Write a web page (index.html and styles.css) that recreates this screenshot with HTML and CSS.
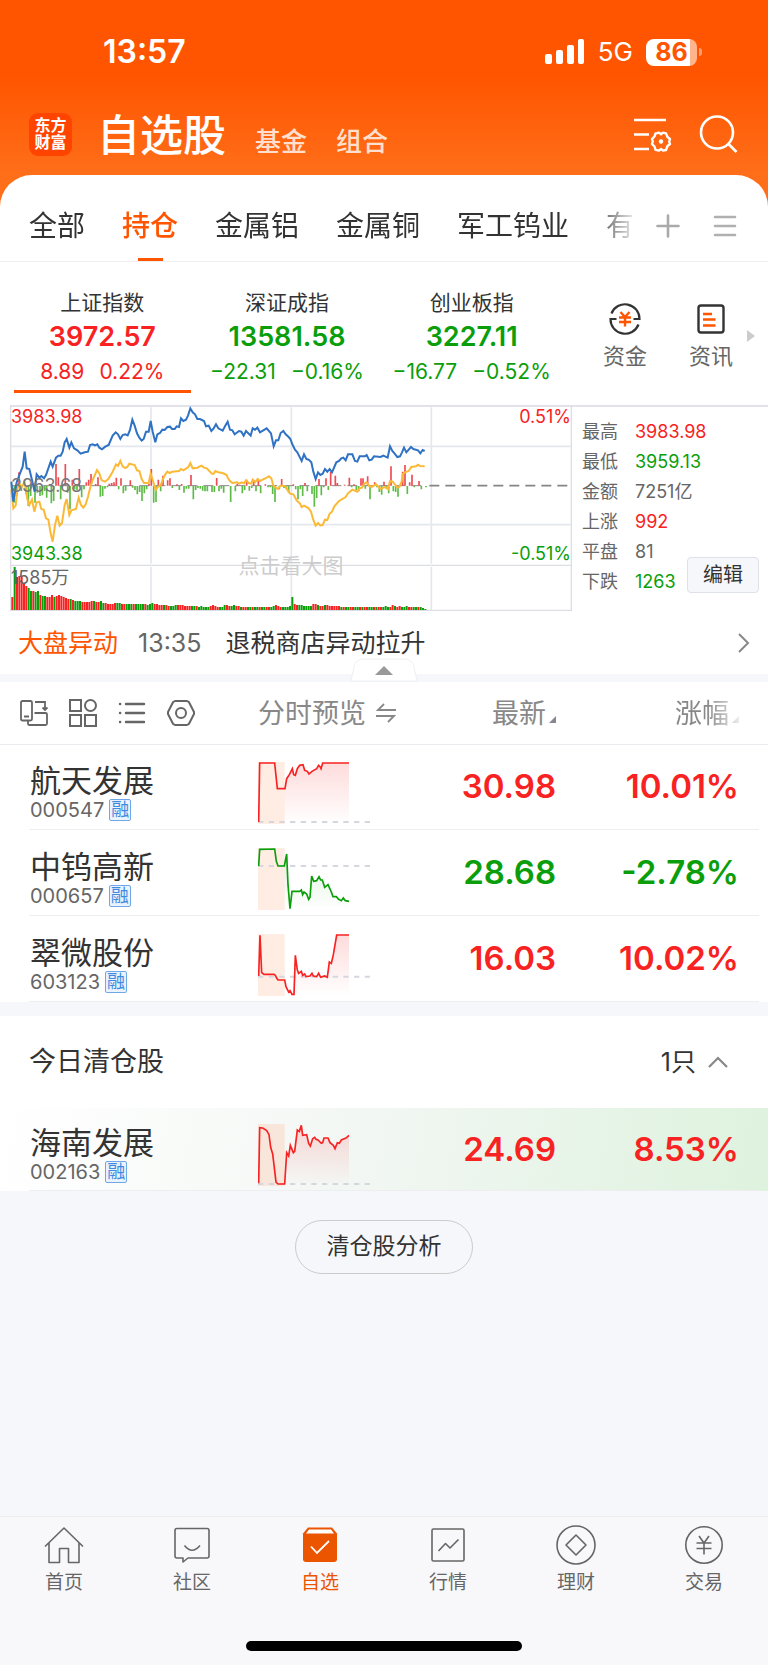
FILE: index.html
```html
<!DOCTYPE html>
<html lang="zh-CN">
<head>
    <meta charset="UTF-8">
    <meta name="viewport" content="width=device-width, initial-scale=1.0">
    <title>自选股</title>
    <link rel="stylesheet" href="styles.css">
</head>
<body>
    <header class="header">
        <div class="status">
            <span class="status-time">13:57</span>
            <div class="status-right">
                <svg width="40" height="26" viewBox="0 0 40 26" fill="#fff">
                    <rect x="0" y="15" width="7" height="10" rx="2"/>
                    <rect x="11" y="11" width="7" height="14" rx="2"/>
                    <rect x="22" y="6" width="7" height="19" rx="2"/>
                    <rect x="33" y="0" width="6" height="25" rx="2"/>
                </svg>
                <span class="status-net">5G</span>
                <div class="battery"><span class="battery-body">86</span><span class="battery-tip"></span></div>
            </div>
        </div>
        <div class="brand">
            <div class="logo"><span>东方</span><span>财富</span></div>
            <nav class="brand-nav">
                <a class="brand-title" href="#">自选股</a>
                <a href="#">基金</a>
                <a href="#">组合</a>
            </nav>
            <button type="button" class="icon-btn" aria-label="设置">
                <svg width="40" height="38" viewBox="0 0 40 38" fill="none" stroke="#fff" stroke-width="2.6">
                    <path d="M1 4H33M1 18.500H16M1 33H16"/>
                    <path d="M24 17.200L26 16.600L28 18.200L30 16.600L33 17.400L34.500 21L37 23L36.200 25.500L37 28L34.500 30L33 34L30 34.600L28 33L26 34.600L22.500 33.800L21.500 30.500L19 28L19.800 25.500L19 23L21.500 20.500L22.500 17.400Z" stroke-width="2.4" stroke-linejoin="round"/>
                    <circle cx="28" cy="25.500" r="2.200" fill="#fff" stroke="none"/>
                </svg>
            </button>
            <button type="button" class="icon-btn" aria-label="搜索">
                <svg width="40" height="40" viewBox="0 0 40 40" fill="none" stroke="#fff" stroke-width="2.6">
                    <circle cx="19" cy="17.500" r="16"/>
                    <path d="M30 28.500L38.500 37"/>
                </svg>
            </button>
        </div>
    </header>

    <main class="main">
        <div class="tabs">
            <nav class="tabs-list">
                <a href="#">全部</a>
                <a href="#" class="active">持仓</a>
                <a href="#">金属铝</a>
                <a href="#">金属铜</a>
                <a href="#">军工钨业</a>
                <a href="#">有</a>
            </nav>
            <button type="button" class="icon-btn" aria-label="添加">
                <svg width="24" height="24" viewBox="0 0 24 24" stroke="#aaa" stroke-width="2.6" stroke-linecap="round"><path d="M1.500 12H22.500M12 1.500V22.500"/></svg>
            </button>
            <button type="button" class="icon-btn" aria-label="菜单">
                <svg width="24" height="24" viewBox="0 0 24 24" stroke="#b0b0b0" stroke-width="2.6" stroke-linecap="round"><path d="M2 3H22M2 12H22M2 21H22"/></svg>
            </button>
        </div>

        <section class="indices">
            <a href="#" class="index up active">
                <span class="index-name">上证指数</span>
                <strong>3972.57</strong>
                <span class="index-diff"><span>8.89</span><span>0.22%</span></span>
            </a>
            <a href="#" class="index down">
                <span class="index-name">深证成指</span>
                <strong>13581.58</strong>
                <span class="index-diff"><span>−22.31</span><span>−0.16%</span></span>
            </a>
            <a href="#" class="index down">
                <span class="index-name">创业板指</span>
                <strong>3227.11</strong>
                <span class="index-diff"><span>−16.77</span><span>−0.52%</span></span>
            </a>
            <div class="tools">
                <a href="#">
                    <svg width="34" height="34" viewBox="0 0 34 34" fill="none" stroke="#333" stroke-width="2.2">
                        <path d="M3.500 11.500A14.500 14.500 0 0 1 31.500 17H25.500"/>
                        <path d="M30.500 22.500A14.500 14.500 0 0 1 2.500 17H8.500"/>
                        <path d="M12.500 10L17 15L21.500 10M11 15.500H23M11 20H23M17 15V24.500" stroke="#ff5500" stroke-width="2.4"/>
                    </svg>
                    <span>资金</span>
                </a>
                <a href="#">
                    <svg width="34" height="34" viewBox="0 0 34 34" fill="none" stroke="#333" stroke-width="2.400">
                        <rect x="4.500" y="3.500" width="25" height="27" rx="2.500"/>
                        <path d="M9 12H18M9 17.500H21.500M9 23.500H21.500" stroke="#ff5500" stroke-width="2.400"/>
                    </svg>
                    <span>资讯</span>
                </a>
                <svg class="tools-more" width="8" height="12" viewBox="0 0 8 12" fill="#ccc"><path d="M0 0L8 6L0 12Z"/></svg>
            </div>
        </section>

        <section class="market">
            <div class="chart">
                <svg class="chart-svg" viewBox="30 30 1686 618" fill="none">
                    <g stroke="#e4e7ee" stroke-width="5">
                        <path d="M30 154H1715M30 389H1715M453 37V506M453 516V645M874 37V506M874 516V645M1294 37V506M1294 516V645"/>
                    </g>
                    <path d="M32 30V646H1714V30M32 511H1714" stroke="#dcdee4" stroke-width="4"/>
                    <path d="M34 272H1280" stroke="#888" stroke-width="3" stroke-dasharray="30 18"/>
                    <path d="M1288 272H1704" stroke="#858585" stroke-width="5" stroke-dasharray="30 18"/>
                    <g id="flow" stroke-width="5"></g>
                    <g id="volume" stroke-width="6"></g>
                    <polyline stroke="#fbb935" stroke-width="6" points="34,285 40,340 47,332 52,280 60,268 66,275 74,262 82,312 88,330 96,314 103,350 110,322 118,320 124,342 131,344 138,370 145,374 152,415 158,440 165,390 172,362 179,392 186,384 194,330 200,312 208,360 214,346 228,342 236,308 243,330 250,338 257,328 264,305 270,280 278,255 291,225 298,235 305,256 315,260 325,252 338,230 348,208 354,213 361,198 368,214 376,219 382,216 388,206 404,210 411,226 418,228 425,252 432,264 446,264 452,236 459,258 467,285 474,275 482,272 489,252 496,238 502,230 509,234 517,230 537,228 543,222 550,226 565,216 571,204 578,220 592,218 604,212 612,218 620,220 636,236 641,236 646,228 655,232 668,234 680,240 684,250 690,258 697,264 711,262 718,266 725,262 732,265 738,256 746,264 754,266 758,254 765,262 773,252 780,258 800,248 807,244 814,250 820,272 827,278 834,282 841,272 848,272 856,274 862,284 870,296 880,298 890,316 900,326 905,336 912,332 926,340 933,350 940,375 947,392 954,384 961,391 968,390 975,374 982,375 989,356 996,350 1003,334 1017,318 1037,306 1044,295 1057,284 1072,290 1079,280 1086,278 1093,266 1100,262 1107,272 1114,276 1128,268 1142,282 1149,278 1156,276 1164,282 1170,258 1178,260 1192,278 1198,276 1205,260 1208,238 1215,232 1226,228 1234,216 1248,214 1254,209 1260,213 1274,214"/>
                    <polyline stroke="#2f72c4" stroke-width="6" points="34,260 40,320 50,262 60,235 68,215 74,170 80,220 88,222 96,255 104,290 110,238 118,248 124,243 132,250 138,240 152,200 158,215 168,188 175,182 182,182 188,170 194,142 200,132 208,158 214,142 222,160 232,166 242,176 254,172 264,170 270,150 278,148 285,151 292,148 298,158 306,163 316,155 326,150 338,122 347,112 354,118 361,132 368,120 376,118 383,121 390,105 397,74 404,92 411,115 418,128 425,137 431,132 438,110 446,110 452,78 458,110 466,142 472,118 480,114 487,104 494,105 502,96 510,95 516,102 524,102 530,94 537,96 543,70 550,78 558,74 564,62 571,40 578,52 585,58 592,72 600,72 612,78 618,94 626,92 634,108 641,100 648,88 655,100 668,107 675,94 683,80 690,104 697,106 704,118 717,108 724,110 731,122 738,108 752,122 758,100 765,104 772,98 780,112 800,100 813,115 821,154 828,136 835,136 842,114 850,108 857,118 866,126 871,132 878,150 885,164 892,172 900,188 905,198 912,178 919,192 926,194 934,202 940,230 947,252 954,232 961,240 968,236 975,222 982,230 989,222 996,232 1003,216 1009,202 1017,198 1024,190 1030,188 1037,196 1044,178 1057,178 1065,198 1072,200 1079,184 1095,184 1100,180 1108,196 1115,194 1122,184 1142,186 1150,182 1163,188 1170,154 1177,168 1184,176 1192,186 1200,184 1206,172 1212,158 1219,172 1233,156 1240,162 1254,166 1261,175 1268,165 1274,168"/>
                </svg>
                <span class="mark mark-high up">3983.98</span>
                <span class="mark mark-mid">3963.68</span>
                <span class="mark mark-low down">3943.38</span>
                <span class="mark mark-vol">1585万</span>
                <span class="mark mark-high right up">0.51%</span>
                <span class="mark mark-low right down">-0.51%</span>
                <span class="mark mark-tip">点击看大图</span>
            </div>
            <div class="stats">
                <dl>
                    <dt>最高</dt><dd class="up">3983.98</dd>
                    <dt>最低</dt><dd class="down">3959.13</dd>
                    <dt>金额</dt><dd>7251亿</dd>
                    <dt>上涨</dt><dd class="up">992</dd>
                    <dt>平盘</dt><dd>81</dd>
                    <dt>下跌</dt><dd class="down">1263</dd>
                </dl>
                <button type="button" class="edit">编辑</button>
            </div>
        </section>

        <a href="#" class="news">
            <span class="news-tag">大盘异动</span>
            <time>13:35</time>
            <span class="news-text">退税商店异动拉升</span>
            <svg width="12" height="20" viewBox="0 0 12 20" fill="none" stroke="#888" stroke-width="2"><path d="M1 1L10 10L1 19"/></svg>
        </a>
        <div class="divider">
            <button type="button" class="fold" aria-label="收起">
                <svg width="68" height="24" viewBox="0 0 68 24">
                    <path d="M1 23L4 9Q6 1 14 1H54Q62 1 64 9L67 23Z" fill="#fff" stroke="#eef0f3"/>
                    <path d="M25 17L34 8L43 17Z" fill="#999"/>
                </svg>
            </button>
        </div>

        <table class="stocks">
            <thead>
                <tr>
                    <th class="col-name">
                        <div class="views">
                            <button type="button" class="icon-btn" aria-label="切换">
                                <svg width="28" height="28" viewBox="0 0 28 28" fill="none" stroke="#666" stroke-width="1.800">
                                    <path d="M8 21.500H2.500Q1 21.500 1 20V3.500Q1 2 2.500 2H10.500Q12 2 12 3.500V20Q12 21.500 10.500 21.500H8M4 17.500H9"/>
                                    <path d="M15 3H25V10M22.500 8.500L25 11L27.500 8.500M14.500 14H25.500Q27 14 27 15.500V24.500Q27 26 25.500 26H9.500Q8 26 8 24.500V22"/>
                                </svg>
                            </button>
                            <button type="button" class="icon-btn" aria-label="宫格">
                                <svg width="28" height="28" viewBox="0 0 28 28" fill="none" stroke="#666" stroke-width="2">
                                    <rect x="1" y="1" width="11" height="11"/>
                                    <circle cx="21.500" cy="6.500" r="5.500"/>
                                    <rect x="1" y="16" width="11" height="11"/>
                                    <rect x="16" y="16" width="11" height="11"/>
                                </svg>
                            </button>
                            <button type="button" class="icon-btn" aria-label="列表">
                                <svg width="28" height="28" viewBox="0 0 28 28" fill="none" stroke="#666" stroke-width="2.400" stroke-linecap="round">
                                    <path d="M8 5H26M8 14H26M8 23H26M2 5H2.200M2 14H2.200M2 23H2.200"/>
                                </svg>
                            </button>
                            <button type="button" class="icon-btn" aria-label="设置">
                                <svg width="28" height="28" viewBox="0 0 28 28" fill="none" stroke="#666" stroke-width="2">
                                    <path d="M8 2H20L22 3.200L27 13L27 15L22 24.800L20 26H8L6 24.800L1 15V13L6 3.200Z" stroke-linejoin="round"/>
                                    <circle cx="14" cy="14" r="5"/>
                                </svg>
                            </button>
                        </div>
                    </th>
                    <th class="col-preview">
                        分时预览
                        <svg class="swap" width="20" height="20" viewBox="0 0 20 20" fill="none" stroke="#888" stroke-width="1.800"><path d="M20 7H2L8 1M0 13H18L12 19"/></svg>
                    </th>
                    <th class="col-price">最新<svg class="sort" width="7" height="7" viewBox="0 0 7 7" fill="#858892"><path d="M7 0V7H0Z"/></svg></th>
                    <th class="col-change"><span class="fade">涨幅<svg class="sort" width="7" height="7" viewBox="0 0 7 7" fill="#858892"><path d="M7 0V7H0Z"/></svg></span></th>
                </tr>
            </thead>
            <tbody>
                <tr>
                    <td class="col-name"><div class="name">航天发展</div><div class="code">000547<span class="badge">融</span></div></td>
                    <td class="col-preview">
                        <svg class="spark" width="114" height="62" viewBox="0 0 342 186" fill="none">
                            <defs>
                                <linearGradient id="redFill" x1="0" y1="0" x2="0" y2="1"><stop offset="0" stop-color="#f82222" stop-opacity="0.160"/><stop offset="1" stop-color="#f82222" stop-opacity="0"/></linearGradient>
                                <linearGradient id="greenFill" x1="0" y1="0" x2="0" y2="1"><stop offset="0" stop-color="#0a9e0a" stop-opacity="0.140"/><stop offset="1" stop-color="#0a9e0a" stop-opacity="0"/></linearGradient>
                            </defs>
                            <rect class="spark-pre" width="80" height="186"/>
                            <path fill="url(#redFill)" d="M80 186V80L86 50L94 38L103 20L107 38L112 40L118 20L125 10L135 8L140 25L148 28L153 36L162 28L176 20L182 10L186 14L189 20L194 3H273V186Z"/>
                            <path class="spark-base" d="M0 180H340"/>
                            <polyline class="spark-line up" points="2,180 5,3 50,3 58,80 81,80 86,50 94,38 103,20 107,38 112,40 118,20 125,10 135,8 140,25 148,28 153,36 162,28 176,20 182,10 186,14 189,20 194,3 273,3"/>
                        </svg>
                    </td>
                    <td class="col-price up">30.98</td>
                    <td class="col-change up">10.01%</td>
                </tr>
                <tr>
                    <td class="col-name"><div class="name">中钨高新</div><div class="code">000657<span class="badge">融</span></div></td>
                    <td class="col-preview">
                        <svg class="spark" width="114" height="62" viewBox="0 0 342 186" fill="none">
                            <rect class="spark-pre" width="80" height="186"/>
                            <path fill="url(#greenFill)" d="M80 186V54L86 18L90 110L96 182L102 130L125 130L134 140L146 138L152 154L156 148L161 84L167 100L183 86L193 96L200 118L210 110L225 146L242 154L273 160V186Z"/>
                            <path class="spark-base" d="M0 54H340"/>
                            <polyline class="spark-line down" points="2,54 5,4 50,3 55,40 60,54 79,54 86,18 90,110 96,182 102,130 125,130 130,126 134,140 138,132 146,138 152,154 156,148 161,84 167,100 176,98 183,86 188,96 193,96 200,118 210,110 220,132 225,146 235,146 242,154 250,158 256,150 262,158 273,160"/>
                        </svg>
                    </td>
                    <td class="col-price down">28.68</td>
                    <td class="col-change down">-2.78%</td>
                </tr>
                <tr>
                    <td class="col-name"><div class="name">翠微股份</div><div class="code">603123<span class="badge">融</span></div></td>
                    <td class="col-preview">
                        <svg class="spark" width="114" height="62" viewBox="0 0 342 186" fill="none">
                            <rect class="spark-pre" width="80" height="186"/>
                            <path fill="url(#redFill)" d="M80 186V138L84 158L92 174L102 181L108 181L112 64L118 108L122 118L130 112L134 124L144 128L156 126L162 118L176 128L182 118L188 130L208 130L214 84L220 88L226 62L236 3H273V186Z"/>
                            <path class="spark-base" d="M0 128H340"/>
                            <polyline class="spark-line up" points="2,126 6,4 11,116 18,121 48,121 52,124 56,132 60,138 80,138 84,158 92,174 96,170 102,181 108,181 112,64 118,108 122,118 130,112 134,124 140,120 144,128 156,126 162,118 166,126 176,128 182,118 188,130 200,126 208,130 214,84 220,88 226,62 236,3 273,3"/>
                        </svg>
                    </td>
                    <td class="col-price up">16.03</td>
                    <td class="col-change up">10.02%</td>
                </tr>
            </tbody>
        </table>

        <div class="cleared-head">
            <h2>今日清仓股</h2>
            <button type="button" class="count">1只
                <svg width="20" height="12" viewBox="0 0 20 12" fill="none" stroke="#888" stroke-width="2.200"><path d="M1 11L10 2L19 11"/></svg>
            </button>
        </div>
        <table class="stocks cleared">
            <tbody>
                <tr>
                    <td class="col-name"><div class="name">海南发展</div><div class="code">002163<span class="badge">融</span></div></td>
                    <td class="col-preview">
                        <svg class="spark" width="114" height="62" viewBox="0 0 342 186" fill="none">
                            <rect class="spark-pre" width="80" height="186"/>
                            <path fill="url(#redFill)" d="M80 186V180L86 86L92 96L97 64L106 86L110 82L118 18L124 22L130 4L134 34L146 32L157 66L164 44L170 40L180 48L190 58L198 42L210 42L216 56L226 64L231 74L238 56L250 48L264 42L273 34V186Z"/>
                            <path class="spark-base" d="M0 180H340"/>
                            <polyline class="spark-line up" points="2,178 5,11 14,12 26,20 33,32 38,70 44,90 50,140 54,174 60,180 80,180 86,86 92,96 97,64 106,86 110,82 118,18 124,22 130,4 134,34 146,32 152,58 157,66 164,44 170,40 174,46 180,48 190,58 194,56 198,42 210,42 216,56 226,64 231,74 238,56 244,58 250,48 264,42 273,34"/>
                        </svg>
                    </td>
                    <td class="col-price up">24.69</td>
                    <td class="col-change up">8.53%</td>
                </tr>
            </tbody>
        </table>
    </main>

    <button type="button" class="analyse">清仓股分析</button>

    <footer class="footer">
        <nav class="tabbar">
            <a href="#">
                <svg width="40" height="40" viewBox="0 0 40 40" fill="none" stroke="#666" stroke-width="1.600" stroke-linejoin="round"><path d="M1 21.500L20 3L39 21.500M5 18V37.500H15.500V23.500H24.500V37.500H35V18"/></svg>
                <span>首页</span>
            </a>
            <a href="#">
                <svg width="40" height="40" viewBox="0 0 40 40" fill="none" stroke="#666" stroke-width="1.600" stroke-linejoin="round"><path d="M5 3.500H35Q37 3.500 37 5.500V31Q37 33 35 33H16L11 37V33H5Q3 33 3 31V5.500Q3 3.500 5 3.500Z"/><path d="M12.500 20.500Q20 30 28 20.500"/></svg>
                <span>社区</span>
            </a>
            <a href="#" class="active">
                <svg width="40" height="40" viewBox="0 0 40 40"><path d="M8 2.500H32L37 8.500V34Q37 37 34 37H6Q3 37 3 34V8.500Z" fill="#eb5500"/><path d="M9 4.500H31L34 8.500H6Z" fill="#fff"/><path d="M11 21.500L17 28L29 16" fill="none" stroke="#fff" stroke-width="1.800"/></svg>
                <span>自选</span>
            </a>
            <a href="#">
                <svg width="40" height="40" viewBox="0 0 40 40" fill="none" stroke="#666" stroke-width="1.600" stroke-linejoin="round"><rect x="4" y="4" width="32" height="32" rx="1.500"/><path d="M10.500 26L17.500 18.500L22 23L30.500 14.500"/></svg>
                <span>行情</span>
            </a>
            <a href="#">
                <svg width="40" height="40" viewBox="0 0 40 40" fill="none" stroke="#666" stroke-width="1.600" stroke-linejoin="round"><circle cx="20" cy="20" r="19"/><path d="M20 10L30 20L20 30L10 20Z"/></svg>
                <span>理财</span>
            </a>
            <a href="#">
                <svg width="40" height="40" viewBox="0 0 40 40" fill="none" stroke="#666" stroke-width="1.600"><circle cx="20" cy="20" r="18.200"/><path d="M15 11L20 18L25 11M12.500 18H27.500M12.500 23.500H27.500M20 18V29.500"/></svg>
                <span>交易</span>
            </a>
        </nav>
        <div class="home-bar"></div>
    </footer>

    <script>
        // [x, height]
        const ups = [[57,40],[168,65],[175,25],[196,65],[217,18],[238,50],[259,10],[266,18],[273,35],[287,5],[294,25],[328,6],[335,8],[342,10],[349,24],[363,22],[391,16],[447,5],[454,50],[475,18],[489,30],[503,16],[510,22],[531,4],[545,5],[573,32],[650,23],[712,6],[740,18],[761,18],[775,18],[796,4],[845,20],[880,4],[915,8],[957,20],[978,22],[992,42],[1006,30],[1012,8],[1034,3],[1048,24],[1062,4],[1083,22],[1089,22],[1103,28],[1124,10],[1152,12],[1173,58],[1208,42],[1215,62],[1229,10],[1236,33],[1257,14]];
        const downs = [[43,50],[50,30],[64,15],[78,25],[85,60],[92,30],[105,50],[112,20],[120,30],[127,28],[134,15],[140,35],[154,52],[161,45],[182,40],[203,20],[210,70],[224,10],[231,12],[245,34],[252,10],[301,32],[308,30],[315,8],[322,4],[356,10],[370,22],[377,14],[398,5],[405,12],[412,25],[419,18],[426,45],[433,22],[440,10],[461,50],[468,48],[482,16],[517,6],[538,12],[552,20],[559,8],[566,8],[580,40],[587,12],[594,6],[601,8],[608,14],[615,16],[622,16],[636,18],[643,18],[657,16],[664,8],[671,20],[692,48],[706,16],[727,22],[734,12],[748,14],[755,6],[768,16],[782,22],[804,4],[811,4],[818,24],[825,48],[838,10],[852,6],[859,10],[866,20],[887,10],[894,40],[901,10],[908,30],[922,16],[936,24],[943,62],[950,36],[964,28],[971,4],[985,12],[1055,4],[1069,12],[1076,16],[1096,8],[1110,40],[1131,4],[1138,18],[1145,26],[1159,8],[1166,22],[1180,16],[1187,18],[1194,32],[1222,24],[1243,4],[1264,10],[1278,4]];
        const volume = [13,43,33,34,34,26,24,22,19,19,18,19,15,14,14,13,13,15,13,14,15,14,13,12,11,11,10,9,9,9,8,8,8,8,9,9,8,8,9,7,7,6,6,6,7,7,7,6,6,6,6,6,6,6,6,6,6,6,5,6,7,6,6,5,5,5,5,4,4,4,5,5,5,5,4,4,4,4,4,4,3,4,3,3,3,4,5,4,3,3,3,5,5,4,4,5,4,4,3,3,3,3,3,3,3,3,3,3,3,3,3,3,4,5,4,3,3,3,3,4,13,6,5,5,5,4,4,4,4,6,6,5,4,4,5,5,4,4,4,4,4,3,3,3,3,3,3,3,3,3,3,3,3,3,3,3,3,3,3,3,4,3,3,5,4,3,4,3,3,4,3,3,3,3,3,3,2,1];
        const colors = 'rgrrrrrggrggrggrrrgrrrrrrgrgggrrrrrgrrggrrrrrggrrgggrggggrgggrrrrgrrgggrrrrrrggrgggggrrrrgggrrggrrgrrggrggrggrrggrrrgggggrrggggggrrgrrgrrrrrrgrggrrggrgrrggrgrrgggrrgrrgggrrggrg';

        function draw(id, d, color) {
            const path = document.createElementNS('http://www.w3.org/2000/svg', 'path');
            path.setAttribute('d', d);
            path.setAttribute('stroke', color);
            document.getElementById(id).appendChild(path);
        }

        draw('flow', ups.map(([x, h]) => `M${x} 272v${-h}`).join(''), '#ee4b52');
        draw('flow', downs.map(([x, h]) => `M${x} 273v${h}`).join(''), '#5dbb46');

        volume.forEach((h, i) => {
            draw('volume', `M${37 + i * 7} 645v${-h * 3}`, colors[i] === 'r' ? '#f82222' : '#0a9e0a');
        });
    </script>
</body>
</html>
```
FILE: styles.css
```css
*{
    box-sizing: border-box;
}
body{
    margin: 0;
    min-height: 100vh;
    display: flex;
    flex-direction: column;
    background-color: #f6f7fa;
    color: #333;
    font-family: Inter, "Noto Sans CJK SC", sans-serif;
    line-height: 1.2;
}
a{
    color: inherit;
    text-decoration: none;
}
button{
    font-family: inherit;
    line-height: inherit;
    color: inherit;
}
svg{
    display: block;
    flex-shrink: 0;
}
.icon-btn{
    padding: 0;
    border: 0;
    background: none;
}
.up{
    color: #f82222;
}
.down{
    color: #0a9e0a;
}

/* header */
.header{
    padding-bottom: 46px;
    color: white;
    background: linear-gradient(#ff5500 36%, #ff6f1a 84%);
}
.status{
    height: 104px;
    padding: 0 66px 0 103px;
    display: flex;
    align-items: center;
    justify-content: space-between;
}
.status-time{
    font-size: 32px;
    font-weight: 600;
}
.status-right{
    display: flex;
    align-items: center;
    gap: 13px;
}
.status-net{
    font-size: 26px;
}
.battery{
    display: flex;
    align-items: center;
    gap: 2px;
}
.battery-body{
    width: 51px;
    height: 27px;
    border-radius: 8px;
    background: linear-gradient(90deg, white 86%, #ffb48c 86%);
    color: #ff5500;
    font-size: 25px;
    font-weight: 700;
    line-height: 27px;
    text-align: center;
}
.battery-tip{
    width: 3px;
    height: 8px;
    border-radius: 0 4px 4px 0;
    background-color: #ffa070;
}
.brand{
    height: 61px;
    padding: 0 30px 0 29px;
    display: flex;
    align-items: center;
    gap: 25px;
}
.logo{
    width: 43px;
    height: 43px;
    padding-top: 4px;
    border-radius: 9px;
    background-color: #ff4400;
    font-size: 16px;
    font-weight: 700;
    line-height: 17px;
    text-align: center;
}
.logo span{
    display: block;
}
.brand-nav{
    flex: 1;
    padding-top: 8px;
    display: flex;
    align-items: baseline;
    gap: 29px;
    font-size: 26px;
    font-weight: 500;
    line-height: 60px;
    color: #ffe0cf;
}
.brand-title{
    color: white;
    font-size: 43px;
}

/* tabs */
.main{
    margin-top: -36px;
    border-radius: 32px 32px 0 0;
    background-color: white;
}
.tabs{
    height: 87px;
    padding: 0 31px 0 29px;
    display: flex;
    align-items: center;
    gap: 33px;
    border-bottom: 1px solid #eee;
}
.tabs-list{
    flex: 1;
    min-width: 0;
    height: 86px;
    margin-right: -16px;
    display: flex;
    gap: 37px;
    font-size: 28px;
    line-height: 102px;
    white-space: nowrap;
    mask-image: linear-gradient(90deg, black 92%, transparent);
}
.tabs-list .active{
    color: #ff5500;
    font-weight: 500;
    background: linear-gradient(#ff5500, #ff5500) no-repeat 50% 100% / 25px 3px;
}
.tabs .icon-btn{
    padding-top: 15px;
}

/* indices */
.indices{
    padding: 29px 0 12px 10px;
    display: grid;
    grid-template-columns: 1fr 1fr 1fr 204px;
}
.index{
    margin: 0 4px;
    padding-bottom: 5px;
    display: flex;
    flex-direction: column;
    align-items: center;
    border-bottom: 3px solid transparent;
}
.index.active{
    border-color: #ff5500;
}
.index-name{
    color: #333;
    font-size: 21px;
    line-height: 24px;
}
.index strong{
    font-size: 27px;
    font-weight: 600;
    line-height: 44px;
}
.index-diff{
    display: flex;
    gap: 15px;
    font-size: 21px;
    line-height: 26px;
}
.tools{
    padding: 11px 13px 0 31px;
    display: flex;
    align-items: flex-start;
    color: #666;
    font-size: 22px;
    line-height: 28px;
}
.tools a{
    width: 60px;
    display: flex;
    flex-direction: column;
    align-items: center;
    gap: 6px;
}
.tools a + a{
    margin-left: 26px;
}
.tools-more{
    margin: 28px 0 0 auto;
}

/* market chart */
.market{
    margin-left: 10px;
    display: grid;
    grid-template-columns: 1fr 196px;
    border-top: 2px solid #e2e3ea;
}
.chart{
    position: relative;
}
.chart-svg{
    width: 100%;
    height: auto;
    margin-top: -2px;
}
.mark{
    position: absolute;
    left: 1px;
    font-size: 18px;
    line-height: 20px;
}
.right{
    left: auto;
    right: 1px;
}
.mark-high{
    top: 0;
}
.mark-mid{
    top: 34%;
    color: #777;
}
.mark-low{
    top: 67%;
}
.mark-vol{
    top: 79%;
    color: #666;
}
.mark-tip{
    left: 0;
    right: 0;
    top: 73%;
    color: #ccc;
    font-size: 21px;
    text-align: center;
}
.stats{
    padding: 10px 9px 0 10px;
    position: relative;
}
.stats dl{
    margin: 0;
    display: grid;
    grid-template-columns: 53px 1fr;
    grid-auto-rows: 30px;
    align-items: center;
    color: #666;
    font-size: 18px;
    line-height: 30px;
}
.stats dd{
    margin: 0;
}
.edit{
    position: absolute;
    right: 9px;
    bottom: 18px;
    width: 72px;
    height: 36px;
    padding: 0;
    border: 1px solid #dfe1e8;
    border-radius: 4px;
    background-color: #f6f7fa;
    font-size: 20px;
}

/* news */
.news{
    height: 63px;
    padding: 0 18px;
    display: flex;
    align-items: center;
    font-size: 25px;
}
.news-tag{
    color: #ff5500;
}
.news time{
    margin: 0 24px 0 20px;
    color: #666;
}
.news-text{
    flex: 1;
}
.divider{
    height: 8px;
    position: relative;
    background-color: #f6f7fa;
}
.fold{
    position: absolute;
    left: 50%;
    bottom: 0;
    margin-left: -34px;
    padding: 0;
    border: 0;
    background: none;
}

/* stock table */
.stocks{
    width: 100%;
    table-layout: fixed;
    border-collapse: collapse;
}
.stocks th,
.stocks td{
    padding: 0;
    text-align: left;
}
.stocks thead tr{
    height: 62px;
    border-bottom: 1px solid #e9ebee;
    color: #888;
    font-size: 27px;
}
.stocks th{
    padding-top: 3px;
    font-weight: 400;
}
.stocks th svg{
    display: inline-block;
}
.views{
    padding-left: 20px;
    display: flex;
    gap: 21px;
}
.swap{
    margin-left: 2px;
}
.fade{
    mask-image: linear-gradient(90deg, black 50%, transparent 110%);
}
.sort{
    margin-left: 3px;
}
.stocks tbody tr{
    height: 86px;
    background: linear-gradient(#eceef0, #eceef0) no-repeat 29px 100% / calc(100% - 38px) 1px;
}
.stocks .col-name{
    width: 33.6%;
}
.stocks .col-preview{
    width: 20%;
}
.stocks .col-price{
    width: 18.8%;
    text-align: right;
}
.stocks .col-change{
    padding-right: 29px;
    text-align: right;
}
.stocks td.col-name{
    padding: 11px 0 0 30px;
}
.stocks td.col-preview{
    padding-top: 11px;
}
.stocks td.col-price,
.stocks td.col-change{
    font-size: 33px;
    font-weight: 600;
}
.name{
    font-size: 31px;
    line-height: 34px;
}
.code{
    display: flex;
    align-items: center;
    gap: 5px;
    color: #666;
    font-size: 20px;
    line-height: 24px;
}
.badge{
    width: 22px;
    height: 22px;
    border: 1px solid #6fa8e8;
    border-radius: 2px;
    background-color: #eaf3fd;
    color: #3f8be0;
    font-size: 18px;
    line-height: 20px;
    text-align: center;
}
.spark-pre{
    fill: #ffece3;
}
.spark-base{
    stroke: #d5d7de;
    stroke-width: 6;
    stroke-dasharray: 16 16;
}
.spark-line{
    stroke: currentColor;
    stroke-width: 5;
}

/* cleared stocks */
.cleared-head{
    height: 106px;
    padding: 0 40px 0 29px;
    display: flex;
    align-items: center;
    justify-content: space-between;
    border-top: 14px solid #f6f7fa;
}
.cleared-head h2{
    margin: 0;
    font-size: 27px;
    font-weight: 400;
}
.count{
    padding: 0;
    display: flex;
    align-items: center;
    gap: 12px;
    border: 0;
    background: none;
    font-size: 25px;
}
.stocks.cleared tbody tr{
    height: 83px;
}
.cleared{
    background: linear-gradient(100deg, white, #f3f7f4 45%, #def2de);
}
.cleared .spark-pre{
    fill: #f8e6db;
}
.analyse{
    align-self: center;
    width: 178px;
    height: 54px;
    margin: 29px 0;
    border: 1px solid #ccc;
    border-radius: 27px;
    background: none;
    font-size: 23px;
}

/* footer */
.footer{
    margin-top: auto;
    padding-bottom: 14px;
    border-top: 1px solid #ebecee;
    background-color: #f8f8fb;
}
.tabbar{
    padding-top: 8px;
    display: grid;
    grid-template-columns: repeat(6, 1fr);
    color: #666;
    font-size: 19px;
    line-height: 28px;
}
.tabbar a{
    display: flex;
    flex-direction: column;
    align-items: center;
    gap: 4px;
}
.tabbar .active{
    color: #eb5500;
}
.home-bar{
    width: 36%;
    height: 10px;
    margin: 44px auto 0;
    border-radius: 5px;
    background-color: black;
}
```
